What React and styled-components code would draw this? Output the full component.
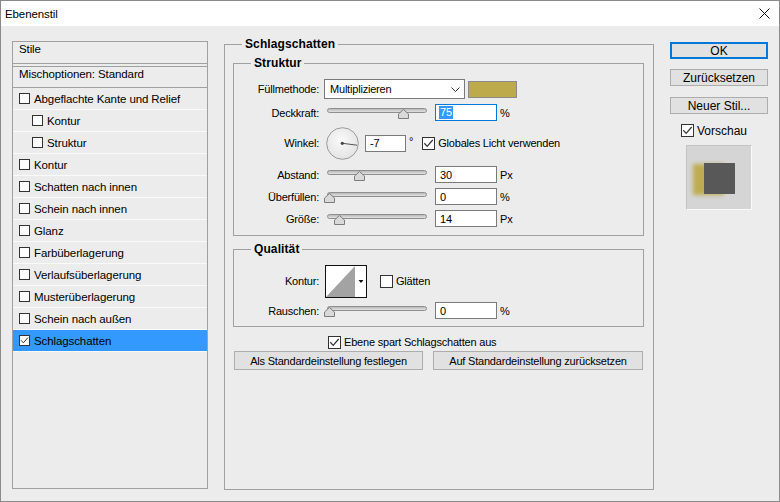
import React from "react";
import styled, { createGlobalStyle } from "styled-components";

const GlobalStyle = createGlobalStyle`
  html, body {
    margin: 0;
    padding: 0;
    background: #ffffff;
  }
  body {
    font-family: "Liberation Sans", Arial, sans-serif;
    font-size: 12px;
    color: #000;
  }
  * {
    box-sizing: border-box;
  }
`;

const Window = styled.div`
  width: 780px;
  height: 502px;
  border: 1px solid #8a8a8a;
  background: #ececec;
  display: flex;
  flex-direction: column;
`;

const TitleBar = styled.div`
  height: 25px;
  flex-shrink: 0;
  background: #fff;
  display: flex;
  align-items: center;
  justify-content: space-between;
  padding: 0 9px 0 4px;
  line-height: 14px;
  font-size: 11.5px;
  letter-spacing: -0.1px;
`;

const Body = styled.div`
  flex: 1;
  display: flex;
  align-items: flex-start;
  padding: 15px 0 0 11px;
`;

/* ---------- left list ---------- */

const StylePanel = styled.div`
  width: 196px;
  height: 448px;
  border: 1px solid #a0a0a0;
  display: flex;
  flex-direction: column;
  font-size: 11.5px;
  letter-spacing: -0.1px;
`;

const PanelHeader = styled.div`
  height: ${p => p.$h}px;
  margin-top: ${p => p.$mt || 0}px;
  border-top: ${p => (p.$top ? "1px solid #a0a0a0" : "none")};
  border-bottom: 1px solid #a0a0a0;
  padding-left: 6px;
  line-height: 14px;
`;

const StyleRow = styled.div`
  height: 22px;
  display: flex;
  align-items: center;
  padding-left: ${p => (p.$sub ? 19 : 6)}px;
  border-bottom: 1px solid #fafafa;
  background: ${p => (p.$selected ? "#3399ff" : "transparent")};
  line-height: 14px;
  gap: 4px;
`;

/* ---------- check box ---------- */

const CheckBox = styled.span`
  width: ${p => p.$size}px;
  height: ${p => p.$size}px;
  flex-shrink: 0;
  border: 1px solid #333;
  background: #fff;
  display: inline-flex;
  align-items: center;
  justify-content: center;
  margin-left: ${p => p.$ml || 0}px;
`;

const Check = ({ checked, size = 12, ml }) => (
  <CheckBox $size={size} $ml={ml}>
    {checked && (
      <svg width={size - 2} height={size - 2} viewBox="0 0 10 10">
        <polyline points="1.2,4.8 3.8,7.6 8.8,1.8" fill="none" stroke="#333" strokeWidth="1.1" />
      </svg>
    )}
  </CheckBox>
);

/* ---------- middle ---------- */

const MiddleColumn = styled.div`
  margin-left: 16px;
  margin-top: 3px;
  font-size: 11px;
  letter-spacing: -0.2px;
`;

const Group = styled.div`
  border: 1px solid #a0a0a0;
  display: flex;
  flex-direction: column;
  width: ${p => (p.$w ? `${p.$w}px` : "auto")};
  height: ${p => (p.$h ? `${p.$h}px` : "auto")};
  margin-top: ${p => p.$mt || 0}px;
  padding-bottom: ${p => p.$pb || 0}px;
`;

const GroupTitle = styled.div`
  align-self: flex-start;
  margin: -8px 0 0 17px;
  padding: 0 3px;
  background: #ececec;
  font-size: 12px;
  font-weight: bold;
  letter-spacing: 0.1px;
  line-height: 14px;
`;

const GroupContent = styled.div`
  display: flex;
  flex-direction: column;
  padding: 0 9px 0 8px;
`;

const Row = styled.div`
  display: flex;
  align-items: center;
  height: ${p => p.$h}px;
  margin-top: ${p => p.$mt}px;
  padding-left: ${p => p.$pl || 0}px;
  line-height: 14px;
`;

const Label = styled.span`
  width: 85px;
  flex-shrink: 0;
  text-align: right;
  margin-right: 5px;
`;

const Select = styled.div`
  width: 141px;
  height: 20px;
  background: #fff;
  border: 1px solid #7a7a7a;
  display: flex;
  align-items: center;
  justify-content: space-between;
  padding: 0 4px 0 5px;
`;

const Swatch = styled.div`
  width: 49px;
  height: 17px;
  margin-left: 3px;
  border: 1px solid #8a8a8a;
  background: #bdaa4b;
`;

const SliderWrap = styled.div`
  position: relative;
  width: 106px;
  height: 17px;
  flex-shrink: 0;
`;

const Track = styled.div`
  margin: 4px 0 0 3px;
  width: 100px;
  height: 5px;
  border: 1px solid #8f8f8f;
  border-radius: 3px;
  background: linear-gradient(#b9b9b9, #e2e2e2);
`;

const Thumb = styled.svg`
  position: absolute;
  top: 5px;
`;

const Slider = ({ value }) => (
  <SliderWrap>
    <Track />
    <Thumb width="11" height="10" viewBox="0 0 11 10" style={{ left: `${value * 0.99}px` }}>
      <polygon points="5.5,0.5 10.5,5 10.5,9.5 0.5,9.5 0.5,5" fill="#d9d9d9" stroke="#7c7c7c" />
    </Thumb>
  </SliderWrap>
);

const Field = styled.div`
  width: ${p => p.$w}px;
  height: 17px;
  margin-left: ${p => p.$ml}px;
  background: #fff;
  border: 1px solid ${p => (p.$focus ? "#0078d7" : "#7a7a7a")};
  display: flex;
  align-items: center;
  padding-left: 4px;
  flex-shrink: 0;
`;

const Selected = styled.span`
  background: #3399ff;
  color: #fff;
  line-height: 13px;
  padding: 0 1px;
  margin-left: -1px;
`;

const Unit = styled.span`
  margin-left: 3px;
`;

const Degree = styled.span`
  margin-left: 3px;
  align-self: flex-start;
  margin-top: 7px;
`;

const Text = styled.span`
  margin-left: 3px;
  white-space: nowrap;
`;

const ButtonRow = styled.div`
  display: flex;
  gap: 10px;
  margin-top: 2px;
  padding-left: 1px;
`;

const Button = styled.button`
  font-family: inherit;
  font-size: ${p => (p.$small ? 11 : 12)}px;
  letter-spacing: ${p => (p.$small ? -0.2 : 0)}px;
  color: #000;
  width: ${p => (p.$w ? `${p.$w}px` : "100%")};
  height: ${p => p.$h}px;
  margin-top: ${p => p.$mt || 0}px;
  padding: 0;
  background: #e1e1e1;
  border: ${p => (p.$primary ? "2px solid #0078d7" : "1px solid #adadad")};
  line-height: 14px;
`;

/* ---------- right ---------- */

const RightColumn = styled.div`
  width: 98px;
  margin-left: 16px;
  margin-top: 1px;
  display: flex;
  flex-direction: column;
`;

const Preview = styled.div`
  width: 66px;
  height: 65px;
  margin: 8px 0 0 16px;
  background: #d5d5d5;
  border: 1px solid #c4c4c4;
  border-right-color: #fafafa;
  border-bottom-color: #fafafa;
  display: flex;
  align-items: center;
  justify-content: center;
  padding-top: 1px;
`;

const PreviewSquare = styled.div`
  width: 31px;
  height: 31px;
  background: #585858;
  box-shadow: -11px 1px 4px rgba(189, 170, 75, 0.95);
`;

const Dial = () => (
  <svg width="33" height="33" viewBox="0 0 33 33" style={{ marginLeft: 2 }}>
    <defs>
      <radialGradient id="dialFill" cx="0.45" cy="0.4" r="0.65">
        <stop offset="0" stopColor="#fafafa" />
        <stop offset="1" stopColor="#e2e2e2" />
      </radialGradient>
    </defs>
    <circle cx="16.5" cy="16.5" r="15.8" fill="url(#dialFill)" stroke="#9a9a9a" />
    <line x1="16.5" y1="16.3" x2="31" y2="18.2" stroke="#555" strokeWidth="1" />
    <circle cx="16.3" cy="16.3" r="1.6" fill="#444" />
  </svg>
);

const Contour = () => (
  <svg width="42" height="33" viewBox="0 0 42 33" style={{ marginLeft: 1 }}>
    <rect x="0.5" y="0.5" width="41" height="32" fill="#fff" stroke="#111" />
    <polygon points="1,32 30,1 30,32" fill="#a3a3a3" />
    <polygon points="33.5,15 38.5,15 36,18" fill="#111" />
  </svg>
);

const styleItems = [
  { name: "Abgeflachte Kante und Relief" },
  { name: "Kontur", sub: true },
  { name: "Struktur", sub: true },
  { name: "Kontur" },
  { name: "Schatten nach innen" },
  { name: "Schein nach innen" },
  { name: "Glanz" },
  { name: "Farbüberlagerung" },
  { name: "Verlaufsüberlagerung" },
  { name: "Musterüberlagerung" },
  { name: "Schein nach außen" },
  { name: "Schlagschatten", checked: true, selected: true },
];

export default function App() {
  return (
    <>
      <GlobalStyle />
      <Window>
        <TitleBar>
          <span>Ebenenstil</span>
          <svg width="11" height="11" viewBox="0 0 11 11">
            <path d="M0.5 0.5 L10.5 10.5 M10.5 0.5 L0.5 10.5" stroke="#111" strokeWidth="1" />
          </svg>
        </TitleBar>
        <Body>
          <StylePanel>
            <PanelHeader $h={22}>Stile</PanelHeader>
            <PanelHeader $h={22} $mt={2} $top>
              Mischoptionen: Standard
            </PanelHeader>
            {styleItems.map((item, i) => (
              <StyleRow key={i} $sub={item.sub} $selected={item.selected}>
                <Check checked={item.checked} size={11} />
                <span>{item.name}</span>
              </StyleRow>
            ))}
          </StylePanel>

          <MiddleColumn>
            <Group $w={430} $h={446}>
              <GroupTitle>Schlagschatten</GroupTitle>
              <GroupContent>
                <Group $mt={12} $pb={8}>
                  <GroupTitle>Struktur</GroupTitle>
                  <Row $h={20} $mt={9}>
                    <Label>Füllmethode:</Label>
                    <Select>
                      <span>Multiplizieren</span>
                      <svg width="9" height="5" viewBox="0 0 9 5">
                        <polyline points="0.5,0.5 4.5,4.5 8.5,0.5" fill="none" stroke="#333" />
                      </svg>
                    </Select>
                    <Swatch />
                  </Row>
                  <Row $h={17} $mt={5}>
                    <Label>Deckkraft:</Label>
                    <Slider value={75} />
                    <Field $w={62} $ml={5} $focus>
                      <Selected>75</Selected>
                    </Field>
                    <Unit>%</Unit>
                  </Row>
                  <Row $h={32} $mt={6}>
                    <Label>Winkel:</Label>
                    <Dial />
                    <Field $w={41} $ml={6}>-7</Field>
                    <Degree>°</Degree>
                    <Check checked size={13} ml={9} />
                    <Text>Globales Licht verwenden</Text>
                  </Row>
                  <Row $h={17} $mt={7}>
                    <Label>Abstand:</Label>
                    <Slider value={30} />
                    <Field $w={62} $ml={5}>30</Field>
                    <Unit>Px</Unit>
                  </Row>
                  <Row $h={17} $mt={5}>
                    <Label>Überfüllen:</Label>
                    <Slider value={0} />
                    <Field $w={62} $ml={5}>0</Field>
                    <Unit>%</Unit>
                  </Row>
                  <Row $h={17} $mt={5}>
                    <Label>Größe:</Label>
                    <Slider value={10} />
                    <Field $w={62} $ml={5}>14</Field>
                    <Unit>Px</Unit>
                  </Row>
                </Group>

                <Group $mt={13} $pb={7}>
                  <GroupTitle>Qualität</GroupTitle>
                  <Row $h={32} $mt={9}>
                    <Label>Kontur:</Label>
                    <Contour />
                    <Check size={13} ml={13} />
                    <Text>Glätten</Text>
                  </Row>
                  <Row $h={17} $mt={5}>
                    <Label>Rauschen:</Label>
                    <Slider value={0} />
                    <Field $w={62} $ml={5}>0</Field>
                    <Unit>%</Unit>
                  </Row>
                </Group>

                <Row $h={14} $mt={8} $pl={95}>
                  <Check checked size={13} />
                  <Text>Ebene spart Schlagschatten aus</Text>
                </Row>

                <ButtonRow>
                  <Button $w={189} $h={19} $small>Als Standardeinstellung festlegen</Button>
                  <Button $w={210} $h={19} $small>Auf Standardeinstellung zurücksetzen</Button>
                </ButtonRow>
              </GroupContent>
            </Group>
          </MiddleColumn>

          <RightColumn>
            <Button $h={17} $primary>OK</Button>
            <Button $h={17} $mt={10}>Zurücksetzen</Button>
            <Button $h={17} $mt={11}>Neuer Stil...</Button>
            <Row $h={13} $mt={10} $pl={11}>
              <Check checked size={13} />
              <Text>Vorschau</Text>
            </Row>
            <Preview>
              <PreviewSquare />
            </Preview>
          </RightColumn>
        </Body>
      </Window>
    </>
  );
}
